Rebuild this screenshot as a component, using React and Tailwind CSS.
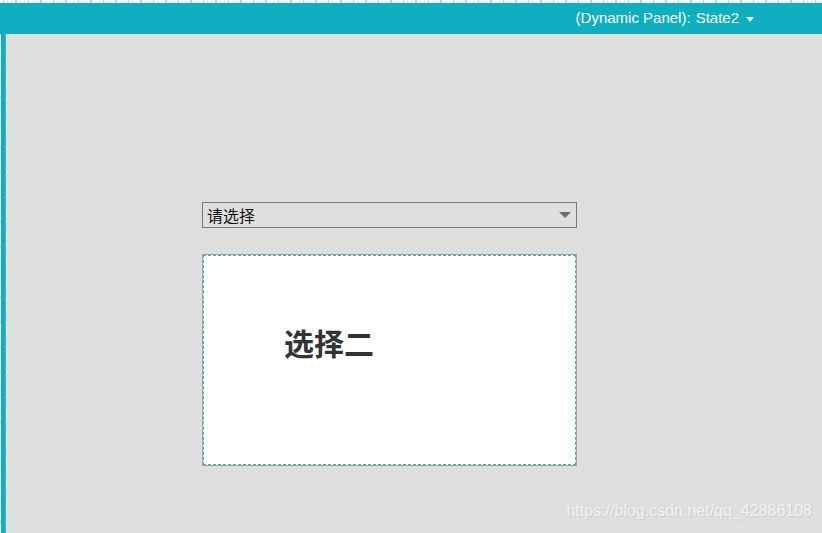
export default function App() {
  return (
    <div
      className="relative w-[822px] h-[533px] overflow-hidden bg-[#dfdfdf] flex flex-col"
      style={{ fontFamily: '"Liberation Sans", Arial, "Noto Sans CJK SC", sans-serif' }}
    >
      {/* RULER */}
      <div className="h-[3px] shrink-0 bg-[repeating-linear-gradient(90deg,#cfcfcf_0px,#cfcfcf_1px,#f7f7f7_1px,#f7f7f7_12.5px)] bg-[position:3px_0]" />

      {/* HEADER */}
      <div className="h-[31px] shrink-0 bg-[#0fafc2] flex items-center justify-end pr-[68px] text-white text-[15px]">
        <span>(Dynamic Panel):</span>
        <span className="ml-[5px]">State2</span>
        <svg className="ml-[7px] mt-[1px]" width="8" height="5" viewBox="0 0 8 5">
          <path d="M0 0h8L4 5z" fill="#fff" />
        </svg>
      </div>

      <div className="flex flex-1">
        {/* LEFT RULER + STRIP */}
        <div className="w-[1px] bg-[repeating-linear-gradient(180deg,#cfcfcf_0px,#cfcfcf_1px,#f7f7f7_1px,#f7f7f7_12.5px)]" />
        <div className="w-[5px] bg-[#0fafc2] border-r border-[#36bccd]" />

        {/* CANVAS */}
        <div className="flex-1 pl-[196px] pt-[168px]">
          <div className="w-[375px] h-[26px] border border-[#7a7a7a] bg-[#dfdfdf] flex items-center justify-between pl-[4px] pr-[5px]">
            <span className="text-[16px] leading-[20px] text-[#111]" style={{ fontFamily: '"Noto Sans CJK SC", sans-serif' }}>请选择</span>
            <svg width="12" height="6" viewBox="0 0 12 6">
              <path d="M0 0h12L6 6z" fill="#6d6d6d" />
            </svg>
          </div>

          <div className="ml-[1px] mt-[27px] w-[373px] h-[210px] bg-white border border-dashed border-[#2fb9cb] outline outline-1 outline-[#a0a0a0] pl-[80px] pt-[68px]">
            <span
              className="text-[30px] leading-[36px] font-bold text-[#333]"
              style={{ fontFamily: '"Noto Sans CJK SC", sans-serif' }}
            >
              选择二
            </span>
          </div>
        </div>
      </div>

      {/* WATERMARK */}
      <div className="absolute right-[10px] bottom-[10px] text-[16px] text-[#f4f4f4] [text-shadow:1px_1px_1px_#c8c8c8]">
        https://blog.csdn.net/qq_42886108
      </div>
    </div>
  );
}
